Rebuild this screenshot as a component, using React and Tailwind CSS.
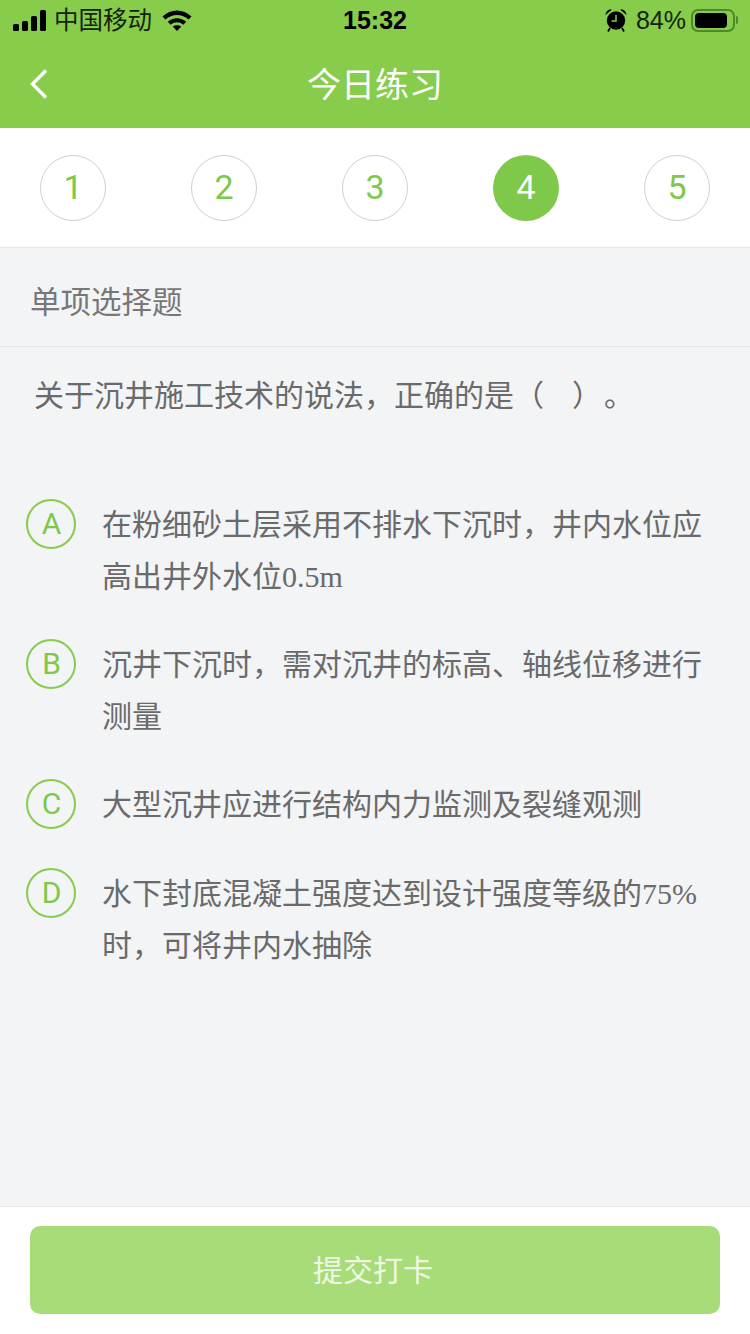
const cjk = { fontFamily: '"Liberation Sans", "Noto Sans CJK SC", sans-serif' };
const mixed = { fontFamily: '"Noto Sans CJK SC", sans-serif' };
const thin = { fontFamily: 'Roboto, "Liberation Sans", sans-serif' };

function Latin({ children }) {
  return <span className="leading-[0]" style={{ fontFamily: '"Liberation Serif", serif' }}>{children}</span>;
}

function StatusBar() {
  return (
    <div className="grid h-[40px] grid-cols-[1fr_auto_1fr] items-center text-black" style={cjk}>
      <div className="flex items-center">
        <div className="ml-[13px] flex h-[21px] items-end gap-[3px]">
          <div className="h-[7px] w-[6px] rounded-[1.5px] bg-black" />
          <div className="h-[10px] w-[6px] rounded-[1.5px] bg-black" />
          <div className="h-[15px] w-[6px] rounded-[1.5px] bg-black" />
          <div className="h-[21px] w-[6px] rounded-[1.5px] bg-black" />
        </div>
        <span className="ml-[8px] pt-[2px] text-[24.500px] leading-none text-[#14240a]">中国移动</span>
        <svg className="ml-[10px]" width="30" height="22" viewBox="0 0 30 22">
          <path d="M0.500 7.500C8.800 -0.500 21.200 -0.500 29.500 7.500L26.600 10.600C20 4.600 10 4.600 3.400 10.600Z" fill="#000" />
          <path d="M5.800 12.700C11 8 19 8 24.200 12.700L21.300 15.800C17.600 12.500 12.400 12.500 8.700 15.800Z" fill="#000" />
          <path d="M10.800 17.600C13.200 15.700 16.800 15.700 19.200 17.600L15 22Z" fill="#000" />
        </svg>
      </div>
      <span className="pt-[1px] text-center text-[25px] leading-none font-bold">15:32</span>
      <div className="flex items-center justify-end pr-[12px]">
        <svg width="22" height="24" viewBox="0 0 22 24">
          <circle cx="11" cy="12.500" r="9.200" fill="#000" />
          <path d="M11 7V13H6.500" fill="none" stroke="#87cc4b" strokeWidth="1.500" />
          <path d="M0.500 7C0.800 3 3.500 1 7 1.500ZM21.500 7C21.200 3 18.500 1 15 1.500Z" fill="#000" />
          <path d="M5 20L3 23.500M17 20L19 23.500" stroke="#000" strokeWidth="1.800" />
        </svg>
        <span className="ml-[9px] pt-[1px] text-[25px] leading-none text-[#14240a]">84%</span>
        <div className="ml-[5px] flex h-[23px] w-[44px] items-center rounded-[7px] border-2 border-[#4f8a28] p-[2px]">
          <div className="h-full w-[32px] rounded-[4px] bg-black" />
        </div>
        <div className="ml-[1px] h-[8px] w-[2px] rounded-r-[2px] bg-[#4f8a28]" />
      </div>
    </div>
  );
}

function NavBar() {
  return (
    <div className="grid h-[88px] grid-cols-[1fr_auto_1fr] items-center">
      <svg className="ml-[29px]" width="20" height="32" viewBox="0 0 20 32">
        <path d="M17 2.500L3.500 16L17 29.500" fill="none" stroke="#fff" strokeWidth="3.400" />
      </svg>
      <span className="pt-[1px] text-[34px] leading-none text-white" style={cjk}>今日练习</span>
      <div />
    </div>
  );
}

function Step({ n, active }) {
  return (
    <div
      className={
        active
          ? "flex h-[66px] w-[66px] items-center justify-center rounded-full bg-[#7ec84a] text-[34px] text-white"
          : "flex h-[66px] w-[66px] items-center justify-center rounded-full border border-[#d0d0d0] bg-white text-[34px] text-[#7ec84a]"
      }
      style={thin}
    >
      {n}
    </div>
  );
}

function Option({ letter, children }) {
  return (
    <div className="flex pb-[36px]">
      <div
        className="ml-[26px] mt-[3px] flex h-[50px] w-[50px] shrink-0 items-center justify-center rounded-full border-2 border-[#87cc4b] pl-[1px] text-[30px] leading-none text-[#7ec84a]"
        style={thin}
      >
        {letter}
      </div>
      <div className="ml-[26px] w-[610px] text-[30px] leading-[52px] text-[#6a6a6a]" style={mixed}>
        {children}
      </div>
    </div>
  );
}

export default function App() {
  return (
    <div className="flex h-[1334px] w-[750px] flex-col overflow-hidden bg-[#f3f4f6]">
      <div className="bg-[#87cc4b]">
        <StatusBar />
        <NavBar />
      </div>
      <div className="flex h-[120px] items-center justify-between border-b border-[#e6e6e6] bg-white px-[40px]">
        <Step n="1" />
        <Step n="2" />
        <Step n="3" />
        <Step n="4" active />
        <Step n="5" />
      </div>
      <div className="flex h-[99px] items-center border-b border-[#e6e6e6] px-[30px] pt-[7px] text-[30.500px] text-[#777777]" style={mixed}>
        单项选择题
      </div>
      <div className="ml-[34px] mt-[20px] flex text-[30px] leading-[52px] text-[#6a6a6a]" style={mixed}>
        <span>关于沉井施工技术的说法，正确的是（</span>
        <span className="ml-[28px]">）</span>
        <span className="ml-[2px]">。</span>
      </div>
      <div className="mt-[77px] flex-1">
        <Option letter="A">在粉细砂土层采用不排水下沉时，井内水位应高出井外水位<Latin>0.5m</Latin></Option>
        <Option letter="B">沉井下沉时，需对沉井的标高、轴线位移进行测量</Option>
        <Option letter="C">大型沉井应进行结构内力监测及裂缝观测</Option>
        <Option letter="D">水下封底混凝土强度达到设计强度等级的<Latin>75%</Latin>时，可将井内水抽除</Option>
      </div>
      <div className="h-[128px] border-t border-[#e8e8e8] bg-white px-[30px] pt-[19px]">
        <div className="flex h-[88px] items-center justify-center rounded-[10px] bg-[#a8dc78] pb-[4px] pr-[4px] text-[30px] text-[#eef8e4]" style={mixed}>
          提交打卡
        </div>
      </div>
    </div>
  );
}
